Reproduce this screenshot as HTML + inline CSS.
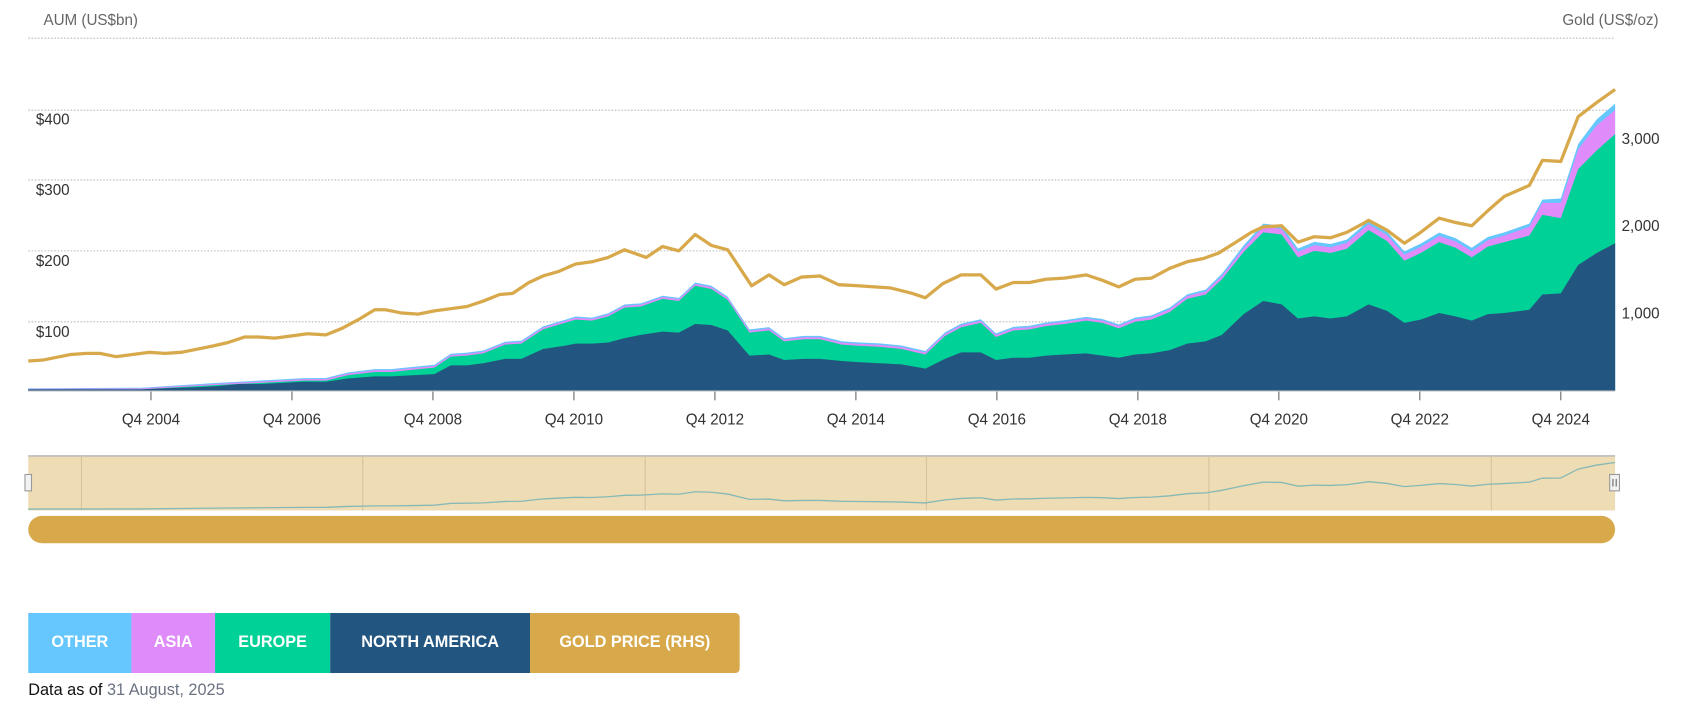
<!DOCTYPE html>
<html><head><meta charset="utf-8">
<style>
html,body{margin:0;padding:0;background:#fff;width:1702px;height:721px;overflow:hidden}
svg{display:block}
text{font-family:"Liberation Sans",Arial,sans-serif}
</style></head><body>
<svg id="s" width="1702" height="721" viewBox="0 0 1567 661" preserveAspectRatio="none" xmlns="http://www.w3.org/2000/svg">
<g stroke="#bbb" stroke-width="1" stroke-dasharray="1.5,1.5">
<line x1="26" y1="35" x2="1487" y2="35"/>
<line x1="26" y1="101" x2="1487" y2="101"/>
<line x1="26" y1="165" x2="1487" y2="165"/>
<line x1="26" y1="230" x2="1487" y2="230"/>
<line x1="26" y1="295" x2="1487" y2="295"/>
</g>
<text x="40" y="23" font-size="14" fill="#666">AUM (US$bn)</text>
<text x="1527" y="23" font-size="14" fill="#666" text-anchor="end">Gold (US$/oz)</text>
<g font-size="14" fill="#333">
<text x="33" y="114">$400</text>
<text x="33" y="179">$300</text>
<text x="33" y="244">$200</text>
<text x="33" y="309">$100</text>
<text x="1493" y="132">3,000</text>
<text x="1493" y="212">2,000</text>
<text x="1493" y="292">1,000</text>
</g>
<path id="pO" fill="#66c6fe"/>
<path id="pA" fill="#df8cfa"/>
<path id="pE" fill="#00d196"/>
<path id="pN" fill="#22557f"/>
<path id="pG" fill="none" stroke="#d8a94b" stroke-width="3" stroke-linejoin="round"/>
<line x1="26" y1="358.5" x2="1487" y2="358.5" stroke="#ccc" stroke-width="1"/>
<g id="xt" font-size="14" fill="#333" text-anchor="middle"></g>
<rect x="26" y="418" width="1461" height="50" fill="#eedcb5"/>
<line x1="26" y1="418" x2="1487" y2="418" stroke="#bbb" stroke-width="1.5"/>
<g stroke="#d6c39c" stroke-width="1">
<line x1="75" y1="418" x2="75" y2="468"/><line x1="334" y1="418" x2="334" y2="468"/><line x1="594" y1="418" x2="594" y2="468"/><line x1="853" y1="418" x2="853" y2="468"/><line x1="1113" y1="418" x2="1113" y2="468"/><line x1="1373" y1="418" x2="1373" y2="468"/>
</g>
<path id="pNav" fill="none" stroke="#86b9b5" stroke-width="1.2"/>
<rect x="23" y="435" width="6" height="15" fill="#f2f2f2" stroke="#999"/>
<rect x="1482" y="435" width="9" height="15" fill="#f2f2f2" stroke="#999"/>
<line x1="1485" y1="439" x2="1485" y2="446" stroke="#666"/><line x1="1488" y1="439" x2="1488" y2="446" stroke="#666"/>
<rect x="26" y="473" width="1461" height="25" rx="12.5" fill="#d8a94b"/>
<rect x="26" y="562" width="95" height="55" fill="#66c6fe"/>
<rect x="121" y="562" width="77" height="55" fill="#df8cfa"/>
<rect x="198" y="562" width="106" height="55" fill="#00d196"/>
<rect x="304" y="562" width="184" height="55" fill="#22557f"/>
<path d="M488 562H677a4 4 0 0 1 4 4V613a4 4 0 0 1-4 4H488z" fill="#d8a94b"/>
<g font-size="15" font-weight="bold" fill="#fff" text-anchor="middle">
<text x="73.5" y="593">OTHER</text>
<text x="159.5" y="593">ASIA</text>
<text x="251" y="593">EUROPE</text>
<text x="396" y="593">NORTH AMERICA</text>
<text x="584.5" y="593">GOLD PRICE (RHS)</text>
</g>
<text x="26" y="637" font-size="15" fill="#111">Data as of <tspan fill="#6b7280">31 August, 2025</tspan></text>
</svg>
<script>
var G=[[26,331],[40,330],[55,327],[65,325],[80,324],[92,324],[107,327],[122,325],[137,323],[152,324],[167,323],[182,320],[197,317],[210,314],[225,309],[238,309],[253,310],[268,308],[283,306],[300,307],[315,301],[330,293],[345,284],[355,284],[370,287],[385,288],[400,285],[415,283],[430,281],[445,276],[460,270],[472,269],[487,259],[500,253],[514,249],[530,242],[545,240],[560,236],[575,229],[595,236],[610,226],[625,230],[640,215],[655,225],[670,229],[692,262],[708,252],[722,261],[738,254],[755,253],[772,261],[790,262],[805,263],[820,264],[840,269],[852,273],[868,260],[885,252],[903,252],[917,265],[933,259],[948,259],[963,256],[980,255],[1000,252],[1015,257],[1030,263],[1045,256],[1060,255],[1077,246],[1093,240],[1108,237],[1122,232],[1138,222],[1152,213],[1163,208],[1180,207],[1195,222],[1210,217],[1225,218],[1240,213],[1255,205],[1260,202],[1277,211],[1293,223],[1308,213],[1325,200],[1340,204],[1355,207],[1370,193],[1385,180],[1408,170],[1420,147],[1437,148],[1453,107],[1470,94],[1487,82]];
var N=[[26,357],[130,357],[150,356],[180,355],[200,354],[220,352],[240,352],[260,351],[280,350],[300,350],[320,347],[345,345],[360,345],[380,344],[400,343],[415,335],[430,335],[445,333],[465,329],[480,329],[500,320],[520,317],[530,315],[545,315],[560,314],[575,310],[590,307],[610,304],[625,305],[640,297],[655,298],[670,303],[690,326],[708,325],[722,330],[740,329],[755,329],[775,331],[790,332],[810,333],[830,334],[852,338],[870,329],[885,323],[903,323],[917,330],[933,328],[948,328],[963,326],[980,325],[1000,324],[1015,326],[1030,328],[1045,325],[1060,324],[1077,321],[1093,315],[1110,313],[1125,307],[1145,288],[1163,276],[1180,279],[1195,292],[1210,290],[1225,292],[1240,290],[1260,279],[1277,285],[1293,296],[1308,293],[1325,287],[1340,290],[1355,294],[1370,288],[1385,287],[1408,284],[1420,270],[1437,269],[1453,243],[1470,232],[1487,223]];
var E=[[26,357],[130,357],[200,353],[240,351],[280,349],[300,349],[320,344],[345,341],[360,341],[380,339],[400,337],[415,327],[430,326],[445,324],[465,316],[480,315],[500,302],[520,296],[530,293],[545,294],[560,290],[575,282],[590,281],[610,274],[625,276],[640,262],[655,265],[670,275],[690,305],[708,303],[722,313],[740,311],[755,311],[775,316],[790,317],[810,318],[830,320],[852,325],[870,308],[885,300],[903,296],[917,309],[933,303],[948,302],[963,299],[980,297],[1000,294],[1015,296],[1030,301],[1045,295],[1060,293],[1077,286],[1093,274],[1110,270],[1125,256],[1145,231],[1163,213],[1180,215],[1195,236],[1210,230],[1225,232],[1240,228],[1260,211],[1277,221],[1293,239],[1308,232],[1325,222],[1340,227],[1355,236],[1370,226],[1385,222],[1408,216],[1420,197],[1437,200],[1453,155],[1470,138],[1487,123]];
function interp(t,x){for(var i=0;i<t.length-1;i++){if(x<=t[i+1][0]){var a=t[i],b=t[i+1];return a[1]+(b[1]-a[1])*(x-a[0])/(b[0]-a[0]);}}return t[t.length-1][1];}
var dA=[[0,0.5],[300,1.5],[1000,2],[1140,3],[1163,5],[1400,6],[1420,11],[1437,14],[1453,18],[1470,23],[1487,22]];
var dO=[[0,0.3],[300,1],[1100,1.5],[1163,3],[1420,3],[1453,5],[1487,6]];
var A=E.map(function(p){return [p[0],p[1]-interp(dA,p[0])]});
var O=A.map(function(p){return [p[0],p[1]-interp(dO,p[0])]});
function area(pts){return "M26,358.5L"+pts.map(function(p){return p[0]+","+p[1]}).join("L")+"L1487,358.5Z";}
function line(pts){return "M"+pts.map(function(p){return p[0]+","+p[1]}).join("L");}
document.getElementById("pO").setAttribute("d",area(O));
document.getElementById("pA").setAttribute("d",area(A));
document.getElementById("pE").setAttribute("d",area(E));
document.getElementById("pN").setAttribute("d",area(N));
document.getElementById("pG").setAttribute("d",line(G));
var nav=O.map(function(p){return [p[0],467-(358-p[1])*43/263]});
document.getElementById("pNav").setAttribute("d",line(nav));
var xt=document.getElementById("xt"),s="";
for(var k=0;k<11;k++){var x=139+k*129.8;s+='<line x1="'+x+'" y1="359" x2="'+x+'" y2="367" stroke="#666" stroke-width="1"/><text x="'+x+'" y="389">Q4 '+(2004+2*k)+'</text>';}
xt.innerHTML=s;
</script>
</body></html>
